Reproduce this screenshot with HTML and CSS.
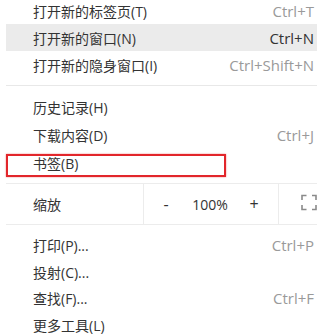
FILE: index.html
```html
<!DOCTYPE html>
<html lang="zh-CN">
<head>
<meta charset="utf-8">
<title>菜单</title>
<link rel="stylesheet" href="styles.css">
</head>
<body>
<div class="menu">
  <div class="group g1">
    <div class="row"><span class="label">打开新的标签页(T)</span><span class="key">Ctrl+T</span></div>
    <div class="row active"><span class="label">打开新的窗口(N)</span><span class="key">Ctrl+N</span></div>
    <div class="row"><span class="label">打开新的隐身窗口(I)</span><span class="key">Ctrl+Shift+N</span></div>
  </div>
  <div class="sep"></div>
  <div class="group g2">
    <div class="row"><span class="label">历史记录(H)</span></div>
    <div class="row"><span class="label">下载内容(D)</span><span class="key">Ctrl+J</span></div>
    <div class="row marked"><span class="label">书签(B)</span></div>
  </div>
  <div class="zoom">
    <div class="zoom-label">缩放</div>
    <div class="zoom-ctrl">
      <span class="zbtn minus">-</span>
      <span class="zval">100%</span>
      <span class="zbtn plus">+</span>
    </div>
    <div class="zoom-full">
      <svg class="full-icon" width="16" height="17" viewBox="0 0 16 17">
        <path d="M1 6V1.5h4.5M11 1.5h4V6M15 11v4.5h-4M5.5 15.5H1V11" fill="none" stroke="#8a8a8a" stroke-width="1.6"/>
      </svg>
    </div>
  </div>
  <div class="group g3">
    <div class="row"><span class="label">打印(P)...</span><span class="key">Ctrl+P</span></div>
    <div class="row"><span class="label">投射(C)...</span></div>
    <div class="row"><span class="label">查找(F)...</span><span class="key">Ctrl+F</span></div>
    <div class="row"><span class="label">更多工具(L)</span></div>
  </div>
</div>
</body>
</html>
```

FILE: styles.css
```css
html, body {
  margin: 0;
  padding: 0;
  background: #ffffff;
  overflow: hidden;
}

body {
  font-family: "Open Sans", "Noto Sans CJK SC", sans-serif;
  font-size: 14px;
  color: #333333;
}

.menu {
  margin: -3px 0 0 6px;
  width: 311px;
  background: #ffffff;
}

.row {
  position: relative;
  height: 27px;
  display: flex;
  align-items: center;
  justify-content: space-between;
  padding: 0 3px 0 27px;
}

.g2 .row {
  height: 28px;
}

.label {
  white-space: nowrap;
}

.key {
  font-size: 15px;
  color: #9a9a9a;
  white-space: nowrap;
}

.row.active {
  background: #ebebeb;
}

.row.active .key {
  color: #333333;
}

.sep {
  height: 1px;
  background: #e8e8e8;
  margin: 7px 0 7px 0;
}

.row.marked::after {
  content: "";
  position: absolute;
  left: 0;
  top: 5px;
  width: 216px;
  height: 19px;
  border: 2px solid #e2262b;
  box-shadow: 0 0 1.5px rgba(226, 38, 43, 0.6);
}

.zoom {
  margin-top: 6px;
  display: flex;
  height: 40px;
  border-top: 1px solid #ececec;
  border-bottom: 1px solid #ececec;
}

.zoom-label {
  width: 110px;
  padding-left: 27px;
  display: flex;
  align-items: center;
}

.zoom-ctrl {
  width: 134px;
  border-left: 1px solid #ececec;
  display: flex;
  align-items: center;
}

.zbtn, .zval {
  width: 44px;
  text-align: center;
}

.zbtn {
  font-size: 16px;
  color: #333333;
}

.zoom-full {
  flex: 1;
  border-left: 1px solid #ececec;
  padding-left: 22px;
  display: flex;
  align-items: center;
}

.full-icon {
  display: block;
  margin-top: -3px;
}

.g3 {
  margin-top: 7px;
}

.g3 .row {
  height: 26.5px;
}
```
